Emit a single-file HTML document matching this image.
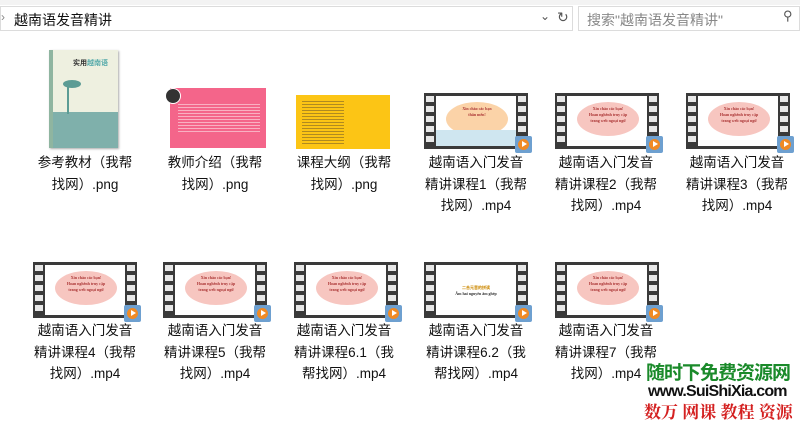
<!DOCTYPE html>
<html><head><meta charset="utf-8"><style>
body{margin:0;width:800px;height:422px;background:#fff;position:relative;overflow:hidden;font-family:"Liberation Sans","Noto Sans CJK SC",sans-serif;}
.a{position:absolute}
.lbl{position:absolute;width:126px;text-align:center;font-size:13.5px;line-height:21.5px;color:#111}
.vid{position:absolute;width:104px;height:56px;background:#3a3a3a}
.vid:before,.vid:after{content:"";position:absolute;top:3px;width:8px;height:50px;background:repeating-linear-gradient(#e8e8e8 0 6px,transparent 6px 10px)}
.vid:before{left:2px}.vid:after{right:2px}
.vid .in{position:absolute;left:12px;right:12px;top:3px;bottom:3px;background:#fff}
.bub{position:absolute;left:10px;top:6px;width:62px;height:34px;border-radius:50%;background:#f7c6c0;font:bold 4px "Liberation Serif",serif;color:#a33;text-align:center;line-height:6px;padding-top:4px;box-sizing:border-box}
.play{position:absolute;right:-4px;bottom:-4px;width:17px;height:17px;background:#6ea0d0;border-radius:2px;z-index:3}
.play:after{content:"";position:absolute;left:3px;top:3px;width:11px;height:11px;border-radius:50%;background:#f08a24}
.play:before{content:"";position:absolute;left:7px;top:5px;border-left:5px solid #fff;border-top:3.5px solid transparent;border-bottom:3.5px solid transparent;z-index:2}
</style></head><body>
<div class="a" style="left:0;top:0;width:800px;height:5px;background:#f3f3f3"></div>
<div class="a" style="left:0;top:6px;width:573px;height:25px;border:1px solid #dcdcdc;box-sizing:border-box"></div>
<div class="a" style="left:1px;top:10px;font-size:12px;color:#888">›</div>
<div class="a" style="left:14px;top:10px;font-size:14px;color:#111">越南语发音精讲</div>
<div class="a" style="left:540px;top:9px;font-size:12px;color:#555">⌄</div>
<div class="a" style="left:557px;top:9px;font-size:14px;color:#555">↻</div>
<div class="a" style="left:578px;top:6px;width:222px;height:25px;border:1px solid #dcdcdc;box-sizing:border-box"></div>
<div class="a" style="left:587px;top:10px;font-size:14px;color:#888">搜索"越南语发音精讲"</div>
<div class="a" style="left:783px;top:8px;font-size:13px;color:#555">⚲</div>

<div class="a" style="left:49px;top:50px;width:69px;height:98px;background:#eef0e0;box-shadow:1px 1px 2px #aaa;overflow:hidden">
<div class="a" style="left:0;top:62px;width:69px;height:36px;background:#7fb0ab"></div>
<div class="a" style="left:0;top:0;width:4px;height:98px;background:#8fb5a0"></div>
<div class="a" style="left:24px;top:8px;font-size:7px;font-weight:bold;color:#333">实用<span style="color:#5aa">越南语</span></div>
<div class="a" style="left:8px;top:28px;width:24px;height:36px;background:linear-gradient(#5c9c95,#5c9c95) 10px 8px/2px 28px no-repeat"></div>
<div class="a" style="left:14px;top:30px;width:18px;height:8px;border-radius:50%;background:#5c9c95"></div>
</div>
<div class="a" style="left:170px;top:88px;width:96px;height:60px;background:#f4658a"></div>
<div class="a" style="left:165px;top:88px;width:14px;height:14px;border-radius:50%;background:#333;border:1px solid #fff"></div>
<div class="a" style="left:178px;top:102px;width:82px;height:30px;background:repeating-linear-gradient(#f4658a 0 2px,#f9b0c2 2px 3px)"></div>
<div class="a" style="left:296px;top:95px;width:94px;height:54px;background:#fcc515"></div>
<div class="a" style="left:302px;top:99px;width:42px;height:46px;background:repeating-linear-gradient(#fcc515 0 2px,#b08a20 2px 3px)"></div>

<div class="vid" style="left:424px;top:93px"><div class="in"><div class="bub" style="background:#fbd3a8">Xin chào các bạn<br>thân mến!</div><div class="a" style="left:0;bottom:0;width:80px;height:16px;background:#cfe6f0"></div></div><div class="play"></div></div>
<div class="vid" style="left:555px;top:93px"><div class="in"><div class="bub">Xin chào các bạn!<br>Hoan nghênh truy cập<br>trang web ngoại ngữ</div></div><div class="play"></div></div>
<div class="vid" style="left:686px;top:93px"><div class="in"><div class="bub">Xin chào các bạn!<br>Hoan nghênh truy cập<br>trang web ngoại ngữ</div></div><div class="play"></div></div>
<div class="vid" style="left:33px;top:262px"><div class="in"><div class="bub">Xin chào các bạn!<br>Hoan nghênh truy cập<br>trang web ngoại ngữ</div></div><div class="play"></div></div>
<div class="vid" style="left:163px;top:262px"><div class="in"><div class="bub">Xin chào các bạn!<br>Hoan nghênh truy cập<br>trang web ngoại ngữ</div></div><div class="play"></div></div>
<div class="vid" style="left:294px;top:262px"><div class="in"><div class="bub">Xin chào các bạn!<br>Hoan nghênh truy cập<br>trang web ngoại ngữ</div></div><div class="play"></div></div>
<div class="vid" style="left:424px;top:262px"><div class="in"><div class="a" style="left:0;top:20px;width:80px;font:bold 4px serif;color:#333;text-align:center;line-height:6px"><span style="color:#c80">二合元音的拼读</span><br>Âm hai nguyên âm ghép</div></div><div class="play"></div></div>
<div class="vid" style="left:555px;top:262px"><div class="in"><div class="bub">Xin chào các bạn!<br>Hoan nghênh truy cập<br>trang web ngoại ngữ</div></div><div class="play"></div></div>

<div class="lbl" style="left:22px;top:152px">参考教材（我帮<br>找网）.png</div>
<div class="lbl" style="left:152px;top:152px">教师介绍（我帮<br>找网）.png</div>
<div class="lbl" style="left:281px;top:152px">课程大纲（我帮<br>找网）.png</div>
<div class="lbl" style="left:413px;top:152px">越南语入门发音<br>精讲课程1（我帮<br>找网）.mp4</div>
<div class="lbl" style="left:543px;top:152px">越南语入门发音<br>精讲课程2（我帮<br>找网）.mp4</div>
<div class="lbl" style="left:674px;top:152px">越南语入门发音<br>精讲课程3（我帮<br>找网）.mp4</div>
<div class="lbl" style="left:22px;top:320px">越南语入门发音<br>精讲课程4（我帮<br>找网）.mp4</div>
<div class="lbl" style="left:152px;top:320px">越南语入门发音<br>精讲课程5（我帮<br>找网）.mp4</div>
<div class="lbl" style="left:281px;top:320px">越南语入门发音<br>精讲课程6.1（我<br>帮找网）.mp4</div>
<div class="lbl" style="left:413px;top:320px">越南语入门发音<br>精讲课程6.2（我<br>帮找网）.mp4</div>
<div class="lbl" style="left:543px;top:320px">越南语入门发音<br>精讲课程7（我帮<br>找网）.mp4</div>

<div class="a" style="left:644px;top:360px;width:156px;height:62px;background:rgba(255,255,255,.85)"></div>
<div class="a" style="left:646px;top:361px;font:bold 19px 'Noto Sans CJK SC',sans-serif;color:#1a8a2a;line-height:22px;letter-spacing:-1px">随时下免费资源网</div>
<div class="a" style="left:648px;top:382px;font:bold 16px 'Liberation Sans',sans-serif;color:#111;line-height:20px;letter-spacing:-0.8px">www.SuiShiXia.com</div>
<div class="a" style="left:644px;top:401px;font:bold 17px 'Noto Serif CJK SC',serif;color:#d42020;line-height:20px">数万 网课 教程 资源</div>
</body></html>
